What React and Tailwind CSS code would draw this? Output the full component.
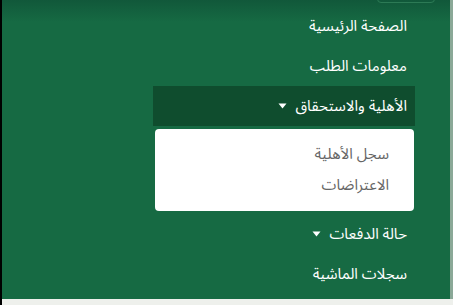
import React from 'react';

const Caret = () => (
  <svg width="9" height="6" viewBox="0 0 9 6" className="shrink-0">
    <path d="M0.5 0.5 L8.5 0.5 L4.5 5.5 Z" fill="#ffffff" />
  </svg>
);

const NavItem = ({ label, active, caret }) => (
  <li
    className={
      'h-[40px] flex items-center pr-[8px] text-[15px] text-white ' +
      (active ? 'bg-[#0f4d2e]' : '')
    }
  >
    <span>{label}</span>
    {caret && (
      <span className="mr-[8px] flex items-center">
        <Caret />
      </span>
    )}
  </li>
);

export default function App() {
  return (
    <div
      dir="rtl"
      className="relative w-[453px] h-[305px] overflow-hidden bg-[#166a43] border-l-[2px] border-l-black"
      style={{ fontFamily: '"Noto Sans Arabic", "DejaVu Sans", sans-serif' }}
    >
      {/* top shade */}
      <div className="absolute top-0 left-0 right-0 h-[22px] bg-gradient-to-b from-[#11583a] to-[#166a43]" />
      {/* box edge peeking from above */}
      <div className="absolute top-[-20px] left-[375px] w-[58px] h-[23px] rounded-[4px] border border-[#2c7a55]" />
      {/* right edge */}
      <div className="absolute top-0 bottom-0 right-0 w-[3px] bg-[#8aa897]" />
      {/* bottom strip */}
      <div className="absolute left-0 right-0 bottom-0 h-[6px] bg-[#eef0ec]" />

      <ul className="relative mr-[38px] w-[262px] pt-[6px]">
        <NavItem label="الصفحة الرئيسية" />
        <NavItem label="معلومات الطلب" />
        <NavItem label="الأهلية والاستحقاق" active caret />
        <li className="mt-[3px] mr-[1px] w-[259px] bg-white rounded-[4px] py-[10px] pr-[25px] text-[15px] text-[#666666]">
          <div className="h-[31px] flex items-center">سجل الأهلية</div>
          <div className="h-[31px] flex items-center">الاعتراضات</div>
        </li>
        <li className="h-[3px]" />
        <NavItem label="حالة الدفعات" caret />
        <NavItem label="سجلات الماشية" />
      </ul>
    </div>
  );
}
